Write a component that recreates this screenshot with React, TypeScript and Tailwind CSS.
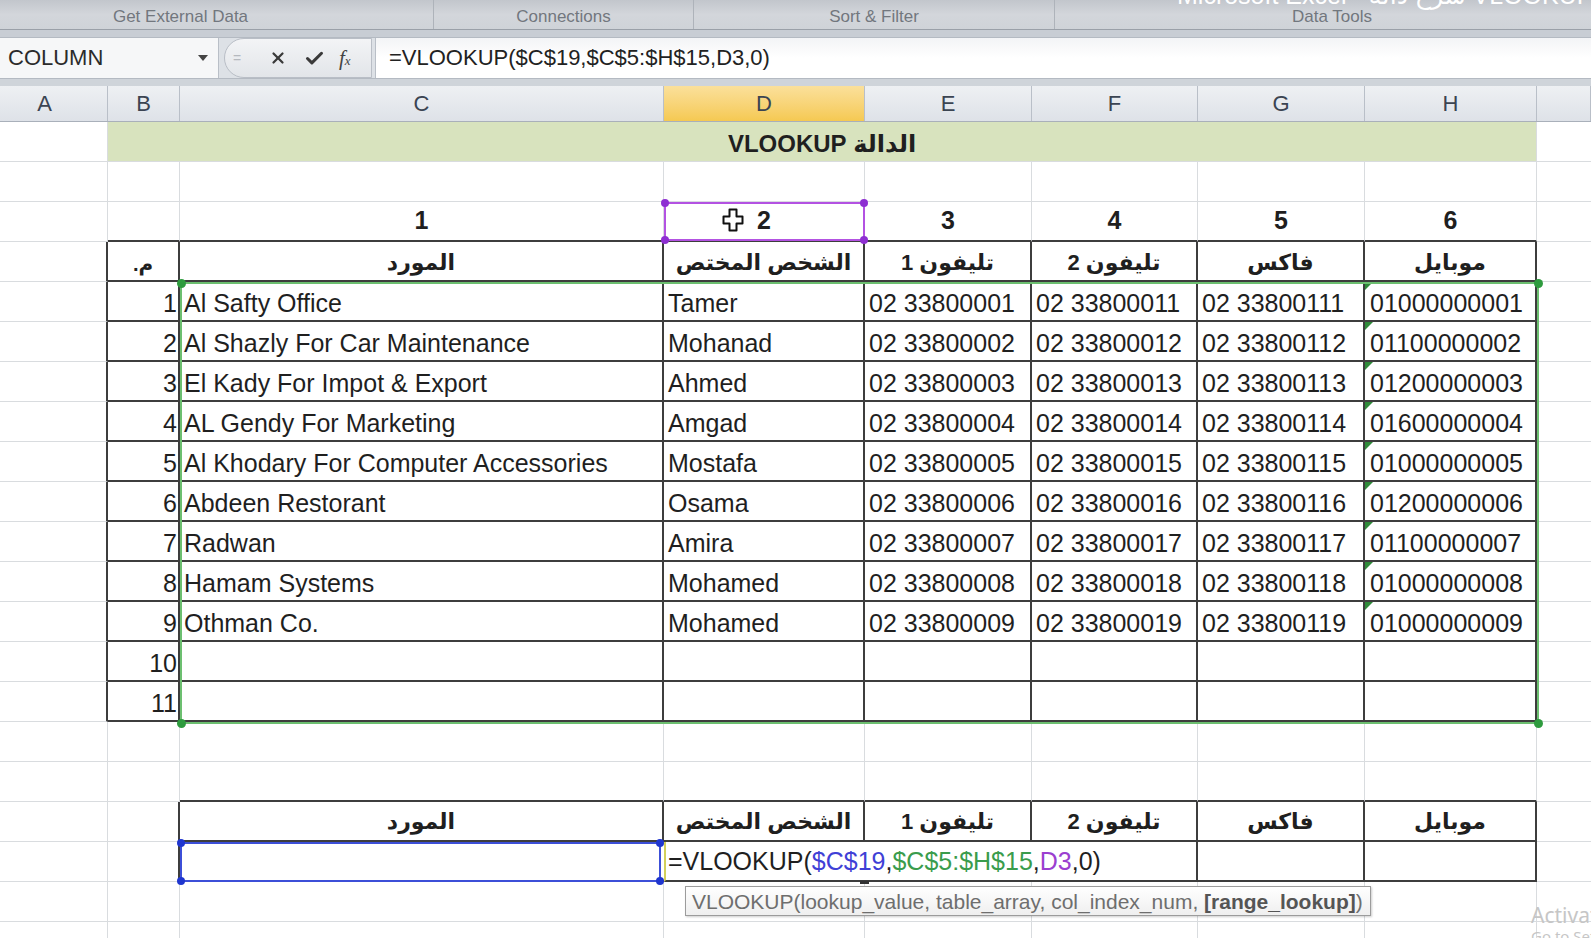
import React from "react";
import { X, Check } from "lucide-react";

const CW = [
  "w-[108px]",
  "w-[72px]",
  "w-[484px]",
  "w-[201px]",
  "w-[167px]",
  "w-[166px]",
  "w-[167px]",
  "w-[172px]",
  "w-[54px]",
];

type Bd = "g" | "d" | "n";
const RC: Record<Bd, string> = {
  g: "border-r border-r-[#d9dcdf]",
  d: "border-r-2 border-r-[#3d3d3d]",
  n: "",
};
const BC: Record<Bd, string> = {
  g: "border-b border-b-[#d9dcdf]",
  d: "border-b-2 border-b-[#3d3d3d]",
  n: "",
};

function Cell({
  w,
  r = "g",
  b = "g",
  className = "",
  children,
  dir,
}: {
  w: string;
  r?: Bd;
  b?: Bd;
  className?: string;
  children?: React.ReactNode;
  dir?: "rtl" | "ltr";
}) {
  return (
    <div
      dir={dir}
      className={`relative flex h-full shrink-0 items-end whitespace-nowrap leading-none ${w} ${RC[r]} ${BC[b]} ${className}`}
    >
      {children}
    </div>
  );
}

function Row({ children }: { children: React.ReactNode }) {
  return <div className="flex h-[40px]">{children}</div>;
}

const data = [
  ["1", "Al Safty Office", "Tamer", "02 33800001", "02 33800011", "02 33800111", "01000000001"],
  ["2", "Al Shazly For Car Maintenance", "Mohanad", "02 33800002", "02 33800012", "02 33800112", "01100000002"],
  ["3", "El Kady For Impot & Export", "Ahmed", "02 33800003", "02 33800013", "02 33800113", "01200000003"],
  ["4", "AL Gendy For Marketing", "Amgad", "02 33800004", "02 33800014", "02 33800114", "01600000004"],
  ["5", "Al Khodary For Computer Accessories", "Mostafa", "02 33800005", "02 33800015", "02 33800115", "01000000005"],
  ["6", "Abdeen Restorant", "Osama", "02 33800006", "02 33800016", "02 33800116", "01200000006"],
  ["7", "Radwan", "Amira", "02 33800007", "02 33800017", "02 33800117", "01100000007"],
  ["8", "Hamam Systems", "Mohamed", "02 33800008", "02 33800018", "02 33800118", "01000000008"],
  ["9", "Othman Co.", "Mohamed", "02 33800009", "02 33800019", "02 33800119", "01000000009"],
  ["10", "", "", "", "", "", ""],
  ["11", "", "", "", "", "", ""],
];

const heads = ["المورد", "الشخص المختص", "تليفون 1", "تليفون 2", "فاكس", "موبايل"];

function EmptyRow() {
  return (
    <Row>
      {CW.map((w, i) => (
        <Cell key={i} w={w} r={i === 8 ? "n" : "g"} />
      ))}
    </Row>
  );
}

function Tri() {
  return (
    <span className="absolute left-0 top-0 h-0 w-0 border-r-[8px] border-t-[8px] border-r-transparent border-t-[#2f8a3a]" />
  );
}

export default function App() {
  return (
    <div className="relative h-[938px] w-[1591px] overflow-hidden bg-white font-['Liberation_Sans','DejaVu_Sans',sans-serif] text-[#1f1f1f]">
      {/* Ribbon group labels */}
      <div className="flex h-[30px] border-b border-b-[#9aa0a8] bg-linear-to-b from-[#c2c6cc] via-[#d3d6db] to-[#cfd3d8] text-[17px] leading-none text-[#72777e]">
        <div className="flex h-full w-[434px] items-center justify-center border-r border-r-[#aeb3ba] pr-[72px] pt-[3px]">
          Get External Data
        </div>
        <div className="flex h-full w-[260px] items-center justify-center border-r border-r-[#aeb3ba] pt-[3px]">
          Connections
        </div>
        <div className="flex h-full w-[361px] items-center justify-center border-r border-r-[#aeb3ba] pt-[3px]">
          Sort &amp; Filter
        </div>
        <div className="flex h-full flex-1 items-center justify-center pl-[18px] pt-[3px]">Data Tools</div>
      </div>
      <div className="h-[7px] bg-[#c8cdd4]" />

      {/* Formula bar */}
      <div className="flex h-[42px] border-y border-y-[#b4bac2] bg-[#dde1e6]">
        <div className="flex h-full w-[219px] items-center justify-between border-r border-r-[#b9bfc7] bg-[#f6f7f8] pl-[8px] pr-[10px] text-[22px] leading-none text-[#2b2b2b]">
          <span>COLUMN</span>
          <span className="h-0 w-0 border-x-[5px] border-t-[6px] border-x-transparent border-t-[#444]" />
        </div>
        <div className="ml-[5px] flex h-full w-[148px] items-center rounded-l-full border border-[#b9bec6] bg-linear-to-b from-[#f3f4f6] to-[#e2e5e9] text-[#333]">
          <span className="ml-[7px] w-[10px] text-center text-[14px] leading-none text-[#b5b9bf]">=</span>
          <X className="ml-[27px]" size={18} strokeWidth={3} color="#3a3a3a" />
          <Check className="ml-[17px]" size={21} strokeWidth={3.5} color="#3a3a3a" />
          <span className="ml-[14px] font-['Liberation_Serif',serif] text-[21px] italic leading-none text-[#444]">
            f<span className="text-[13px]">x</span>
          </span>
        </div>
        <div className="ml-[3px] flex h-full flex-1 items-center border-l border-l-[#b9bfc7] bg-linear-to-b from-[#f3f4f6] via-white to-white pl-[13px] text-[22px] leading-none text-[#222]">
          =VLOOKUP($C$19,$C$5:$H$15,D3,0)
        </div>
      </div>
      <div className="h-[7px] bg-[#cfd4da]" />

      {/* Column headers */}
      <div className="flex h-[36px] border-b border-b-[#a9b0ba] text-[22px] leading-none text-[#3b4452]">
        {["A", "B", "C", "D", "E", "F", "G", "H", ""].map((l, i) => (
          <div
            key={i}
            className={`flex h-full shrink-0 items-center justify-center border-r border-r-[#b9bfc8] ${CW[i]} ${
              i === 3
                ? "bg-linear-to-b from-[#fbe09a] to-[#f5c951]"
                : "bg-linear-to-b from-[#eef0f3] to-[#dee2e8]"
            } ${i === 0 ? "pr-[18px]" : ""}`}
          >
            {l}
          </div>
        ))}
      </div>

      {/* Sheet */}
      <div className="relative">
        {/* Row 1: title */}
        <Row>
          <Cell w={CW[0]} />
          <Cell
            w="w-[1429px]"
            dir="rtl"
            className="justify-center bg-[#d8e3be] pb-[5px] text-[24px] font-bold"
          >
            الدالة VLOOKUP
          </Cell>
          <Cell w={CW[8]} r="n" />
        </Row>
        {/* Row 2 */}
        <EmptyRow />
        {/* Row 3 */}
        <Row>
          <Cell w={CW[0]} />
          <Cell w={CW[1]} b="d" />
          {["1", "2", "3", "4", "5", "6"].map((n, i) => (
            <Cell
              key={i}
              w={CW[i + 2]}
              b="d"
              className="justify-center pb-[7px] text-[25px] font-bold"
            >
              {n}
            </Cell>
          ))}
          <Cell w={CW[8]} r="n" />
        </Row>
        {/* Row 4: headers */}
        <Row>
          <Cell w={CW[0]} r="d" />
          <Cell w={CW[1]} r="d" b="d" dir="rtl" className="justify-center pb-[6px] text-[20px] font-bold">
            م.
          </Cell>
          {heads.map((h, i) => (
            <Cell
              key={i}
              w={CW[i + 2]}
              r="d"
              b="d"
              dir="rtl"
              className="justify-center pb-[6px] text-[22px] font-bold"
            >
              {h}
            </Cell>
          ))}
          <Cell w={CW[8]} r="n" />
        </Row>
        {/* Data rows */}
        {data.map((d, k) => (
          <Row key={k}>
            <Cell w={CW[0]} r="d" />
            <Cell w={CW[1]} r="d" b="d" className="justify-end pb-[4px] pr-[1px] text-[25px]">
              {d[0]}
            </Cell>
            <Cell w={CW[2]} r="d" b="d" className="pb-[4px] pl-[4px] text-[25px]">
              {d[1]}
            </Cell>
            <Cell w={CW[3]} r="d" b="d" className="pb-[4px] pl-[4px] text-[25px]">
              {d[2]}
            </Cell>
            <Cell w={CW[4]} r="d" b="d" className="pb-[4px] pl-[4px] text-[25px]">
              {d[3]}
            </Cell>
            <Cell w={CW[5]} r="d" b="d" className="pb-[4px] pl-[4px] text-[25px]">
              {d[4]}
            </Cell>
            <Cell w={CW[6]} r="d" b="d" className="pb-[4px] pl-[4px] text-[25px]">
              {d[5]}
            </Cell>
            <Cell w={CW[7]} r="d" b="d" className="pb-[4px] pl-[5px] text-[25px]">
              {d[6] ? <Tri /> : null}
              {d[6]}
            </Cell>
            <Cell w={CW[8]} r="n" />
          </Row>
        ))}
        {/* Row 16 */}
        <EmptyRow />
        {/* Row 17 */}
        <Row>
          <Cell w={CW[0]} />
          <Cell w={CW[1]} />
          {[2, 3, 4, 5, 6, 7].map((i) => (
            <Cell key={i} w={CW[i]} b="d" />
          ))}
          <Cell w={CW[8]} r="n" />
        </Row>
        {/* Row 18 */}
        <Row>
          <Cell w={CW[0]} />
          <Cell w={CW[1]} r="d" />
          {heads.map((h, i) => (
            <Cell
              key={i}
              w={CW[i + 2]}
              r="d"
              b="d"
              dir="rtl"
              className="justify-center pb-[7px] text-[22px] font-bold"
            >
              {h}
            </Cell>
          ))}
          <Cell w={CW[8]} r="n" />
        </Row>
        {/* Row 19 */}
        <Row>
          <Cell w={CW[0]} />
          <Cell w={CW[1]} r="d" />
          <Cell w={CW[2]} r="n" b="d" />
          <Cell
            w="w-[534px]"
            r="d"
            b="d"
            className="border-l-2 border-l-[#d3d05a] pb-[6px] pl-[2px] text-[25px]"
          >
            <span>
              =VLOOKUP(<span className="text-[#3f40d6]">$C$19</span>,
              <span className="text-[#3a9c4c]">$C$5:$H$15</span>,
              <span className="text-[#9b3fd0]">D3</span>,0)
            </span>
          </Cell>
          <Cell w={CW[6]} r="d" b="d" />
          <Cell w={CW[7]} r="d" b="d" />
          <Cell w={CW[8]} r="n" />
        </Row>
        <EmptyRow />
        <EmptyRow />

        {/* Range finder: table_array (green) */}
        <div className="absolute left-[180px] top-[160px] h-[442px] w-[1359px] border-2 border-[#6cbf70]" />
        <div className="absolute left-[177px] top-[157px] h-[9px] w-[9px] rounded-full bg-[#2e9b3e]" />
        <div className="absolute left-[1534px] top-[157px] h-[9px] w-[9px] rounded-full bg-[#2e9b3e]" />
        <div className="absolute left-[177px] top-[597px] h-[9px] w-[9px] rounded-full bg-[#2e9b3e]" />
        <div className="absolute left-[1534px] top-[597px] h-[9px] w-[9px] rounded-full bg-[#2e9b3e]" />

        {/* Range finder: col_index_num (purple) */}
        <div className="absolute left-[664px] top-[80px] h-[39px] w-[201px] border-2 border-[#b352e2]" />
        <div className="absolute left-[661px] top-[77px] h-[8px] w-[8px] rounded-full bg-[#8e2fd2]" />
        <div className="absolute left-[860px] top-[77px] h-[8px] w-[8px] rounded-full bg-[#8e2fd2]" />
        <div className="absolute left-[661px] top-[114px] h-[8px] w-[8px] rounded-full bg-[#8e2fd2]" />
        <div className="absolute left-[860px] top-[114px] h-[8px] w-[8px] rounded-full bg-[#8e2fd2]" />

        {/* Range finder: lookup_value (blue) */}
        <div className="absolute left-[180px] top-[720px] h-[40px] w-[481px] border-2 border-[#3c4fd8]" />
        <div className="absolute left-[177px] top-[717px] h-[8px] w-[8px] rounded-full bg-[#1f36cf]" />
        <div className="absolute left-[656px] top-[717px] h-[8px] w-[8px] rounded-full bg-[#1f36cf]" />
        <div className="absolute left-[177px] top-[755px] h-[8px] w-[8px] rounded-full bg-[#1f36cf]" />
        <div className="absolute left-[656px] top-[755px] h-[8px] w-[8px] rounded-full bg-[#1f36cf]" />

        {/* Mouse cursor (fat cross) in D3 */}
        <svg className="absolute left-[722px] top-[86px]" width="22" height="24" viewBox="0 0 22 24">
          <path
            d="M7.5 1.5h7v7h6v7h-6v7h-7v-7h-6v-7h6z"
            fill="white"
            stroke="#111"
            strokeWidth="2"
            strokeLinejoin="round"
          />
        </svg>

        {/* small text cursor tick */}
        <div className="absolute left-[860px] top-[759px] h-[3px] w-[9px] bg-[#333]" />

        {/* Function tooltip */}
        <div className="absolute left-[685px] top-[764px] flex h-[30px] w-[686px] items-center border border-[#9c9c9c] bg-linear-to-b from-white to-[#efefef] pl-[6px] text-[21px] leading-none text-[#6e6e6e] shadow-[1px_1px_2px_rgba(0,0,0,0.2)]">
          <span className="whitespace-nowrap">
            VLOOKUP(lookup_value, table_array, col_index_num,{" "}
            <span className="font-bold text-[#555]">[range_lookup]</span>)
          </span>
        </div>
      </div>

      {/* Window title (cut off at top) */}
      <div className="absolute left-[1177px] top-[-17px] whitespace-nowrap text-[25px] leading-none text-white">
        Microsoft Excel - شرح دالة VLOOKUP
      </div>

      {/* Activate Windows watermark */}
      <div className="absolute left-[1531px] top-[905px] whitespace-nowrap font-['Noto_Sans',sans-serif] text-[21px] leading-none text-[#c6c6c6]">
        Activate Windows
      </div>
      <div className="absolute left-[1531px] top-[929px] whitespace-nowrap font-['Noto_Sans',sans-serif] text-[15px] leading-none text-[#c6c6c6]">
        Go to Settings to activate Windows.
      </div>
    </div>
  );
}
